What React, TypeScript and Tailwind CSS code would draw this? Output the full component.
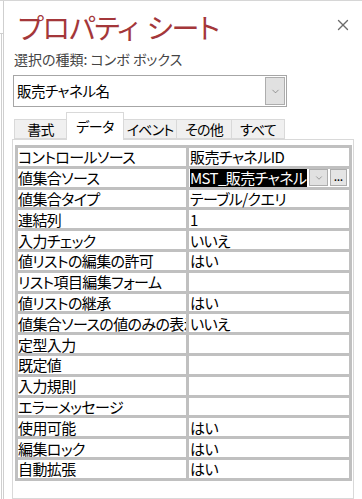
import { X, ChevronDown } from "lucide-react";

const rows: { label: string; value?: string; active?: boolean }[] = [
  { label: "コントロールソース", value: "販売チャネルID" },
  { label: "値集合ソース", value: "MST_販売チャネル", active: true },
  { label: "値集合タイプ", value: "テーブル/クエリ" },
  { label: "連結列", value: "1" },
  { label: "入力チェック", value: "いいえ" },
  { label: "値リストの編集の許可", value: "はい" },
  { label: "リスト項目編集フォーム" },
  { label: "値リストの継承", value: "はい" },
  { label: "値集合ソースの値のみの表示", value: "いいえ" },
  { label: "定型入力" },
  { label: "既定値" },
  { label: "入力規則" },
  { label: "エラーメッセージ" },
  { label: "使用可能", value: "はい" },
  { label: "編集ロック", value: "はい" },
  { label: "自動拡張", value: "はい" },
];

const tabs = ["書式", "データ", "イベント", "その他", "すべて"];
const tabWidths = ["w-[52px]", "w-[58px]", "w-[53px]", "w-[55px]", "w-[53px]"];

export default function App() {
  return (
    <div className="flex h-[499px] w-[362px] overflow-hidden bg-white border-t border-[#d6d6d6] font-['Noto_Sans_CJK_JP','Noto_Sans',sans-serif] [font-feature-settings:'palt'] text-black">
      {/* window frame edge */}
      <div className="flex w-[4px] flex-col border-r border-[#cfcfcf]">
        <div className="h-[32px]" />
        <div className="h-[1px] bg-[#cfcfcf]" />
        <div className="ml-[1px] flex-1 border-l border-[#cfcfcf]" />
      </div>

      <div className="flex flex-1 flex-col">
        <div className="flex items-start justify-between pl-[14px] pr-[10px] pt-[9px]">
          <h1 className="text-[28px] leading-[34px] text-[#a4373a] tracking-[-1px] whitespace-nowrap">
            プロパティ<span className="ml-[9px]">シート</span>
          </h1>
          <X size={18} strokeWidth={1.8} className="mt-[6px] text-[#6b6b6b]" />
        </div>
        <p className="mt-[5px] pl-[10px] text-[14px] leading-[20px] text-[#444] whitespace-nowrap">選択の種類: コンボ ボックス</p>

        <div className="ml-[9px] mt-[6px] flex h-[32px] w-[274px] items-center border border-[#a6a6a6] bg-white pl-[3px] pr-[1px]">
          <span className="flex-1 text-[14.5px] leading-[20px] tracking-[-0.5px] whitespace-nowrap">販売チャネル名</span>
          <div className="flex h-[28px] w-[20px] items-center justify-center border border-[#adadad] bg-[#e1e1e1]">
            <ChevronDown size={11} strokeWidth={1.2} className="text-[#555]" />
          </div>
        </div>

        <div className="ml-[10px] mt-[5px] flex h-[27px] items-end">
          {tabs.map((t, i) =>
            i === 1 ? (
              <div key={t} className={`${tabWidths[i]} relative z-10 -mb-px flex h-[28px] items-center justify-center whitespace-nowrap border border-b-0 border-[#d9d9d9] bg-white text-[14px] tracking-[-0.5px]`}>
                {t}
              </div>
            ) : (
              <div key={t} className={`${tabWidths[i]} flex h-[20px] items-center justify-center whitespace-nowrap border border-[#d9d9d9] bg-[#f0f0f0] text-[14px] tracking-[-0.8px] ${i > 1 ? "border-l-0" : ""} ${i === 0 ? "border-r-0" : ""}`}>
                {t}
              </div>
            )
          )}
        </div>

        <div className="ml-[8px] w-[342px] flex-1 border border-[#d9d9d9] bg-white pl-[2px] pt-[5px]">
          <div className="grid w-[337px] grid-cols-[168px_160px] gap-[3px] bg-[#c0c0c0] p-[3px]">
            {rows.map((r) => (
              <div key={r.label} className="contents">
                <div className={`flex h-[17.8px] items-center whitespace-nowrap bg-white text-[15px] leading-[17px] tracking-[-0.6px] ${r.label.length > 12 ? "overflow-hidden" : ""}`}>{r.label}</div>
                <div className="flex h-[17.8px] items-center whitespace-nowrap bg-white pl-[1px] text-[15px] leading-[17px] tracking-[-0.6px]">
                  {r.active ? (
                    <>
                      <span className="flex h-[17.8px] w-[117px] items-center bg-black text-white">{r.value}</span>
                      <span className="ml-[2px] flex h-[17px] w-[19px] items-center justify-center border border-[#adadad] bg-[#e1e1e1]">
                        <ChevronDown size={10} strokeWidth={1.2} className="text-[#555]" />
                      </span>
                      <span className="ml-[2px] flex h-[17px] w-[17px] items-center justify-center border border-[#adadad] bg-[#e5e5e5] text-[9px] font-bold leading-none tracking-normal">
                        ...
                      </span>
                    </>
                  ) : (
                    r.value
                  )}
                </div>
              </div>
            ))}
          </div>
        </div>
      </div>
    </div>
  );
}
